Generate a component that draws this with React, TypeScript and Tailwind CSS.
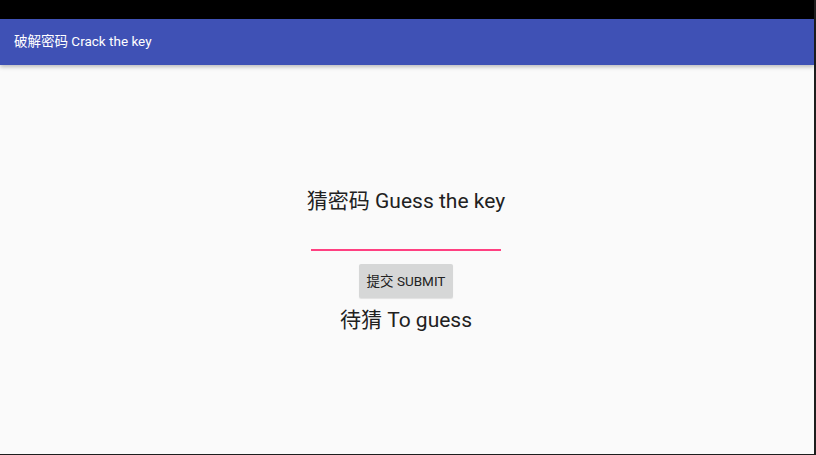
const cjk = "font-['Roboto','Noto_Sans_CJK_SC',sans-serif]";

export default function App() {
  return (
    <div className={`${cjk} flex h-[455px] w-[816px] flex-col border-b border-r-2 border-[#1e1e1e] bg-[#fafafa] text-[#222]`}>
      <div className="h-[19px] shrink-0 bg-black" />
      <header className="relative z-10 flex h-[46px] shrink-0 items-center bg-[#3f51b5] px-[14px] shadow-[0_2px_4px_rgba(0,0,0,0.25)]">
        <span className="text-[13.5px] leading-none text-white">破解密码 Crack the key</span>
      </header>
      <main className="flex flex-1 flex-col items-center pr-[2px] pt-[122px]">
        <h1 className="text-[21px] leading-[28px] text-[#212121]">猜密码 Guess the key</h1>
        <div className="mt-[34px] h-[2px] w-[190px] bg-[#ff4081]" />
        <button className="mt-[13px] h-[34px] w-[94px] rounded-[2px] bg-[#d6d7d7] text-[13.5px] text-[#222] shadow-[0_1px_1px_rgba(0,0,0,0.1)]">
          提交 SUBMIT
        </button>
        <p className="mt-[8px] text-[21px] leading-[28px] text-[#212121]">待猜 To guess</p>
      </main>
    </div>
  );
}
